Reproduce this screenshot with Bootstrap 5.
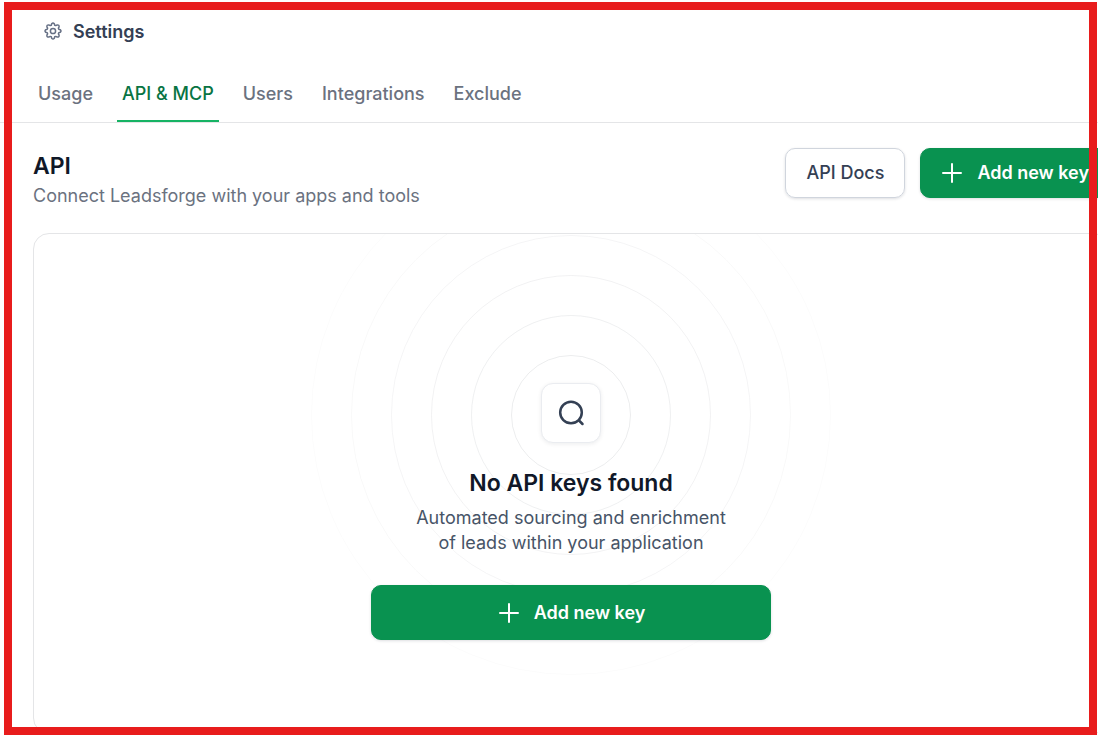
<!DOCTYPE html>
<html lang="en">
<head>
<meta charset="utf-8">
<meta name="viewport" content="width=device-width, initial-scale=1">
<title>Settings – API &amp; MCP</title>
<link rel="stylesheet" href="https://cdn.jsdelivr.net/npm/bootstrap@5.3.0/dist/css/bootstrap.min.css">
<style>
  body { font-family: Inter, "Liberation Sans", sans-serif; font-size: 18px; line-height: 25px; color: #344054; background: #fff; }
  .page-title { font-size: 18px; line-height: 24px; font-weight: 600; color: #344054; }
  .top-bar { padding: 20px 44px 0; gap: 11px; height: 64px; }
  .settings-tabs { padding-left: 33px; gap: 19px; border-bottom: 1px solid #e4e5e7; }
  .settings-tabs .nav-link { padding: 17px 5px 14px; font-weight: 500; color: #6b727f; border-bottom: 2px solid transparent; }
  .settings-tabs .nav-link.active { color: #087443; border-bottom-color: #16b364; }
  .content-area { padding: 25px 0 5px 33px; margin-right: -11px; }
  .section-title { font-size: 23px; line-height: 32px; font-weight: 600; color: #101828; margin: 2px 0 1px; }
  .section-text { color: #6b727f; }
  .btn { font-size: 18px; line-height: 24px; border-radius: 10px; box-shadow: 0 1px 3px rgba(16, 24, 40, .14); }
  .btn-docs { --bs-btn-color: #344054; --bs-btn-border-color: #d0d5dd; --bs-btn-hover-bg: #f9fafb; --bs-btn-hover-border-color: #d0d5dd; font-weight: 500; padding: 12px 20px; }
  .btn-add { --bs-btn-color: #fff; --bs-btn-bg: #099250; --bs-btn-border-color: #099250; --bs-btn-hover-color: #fff; --bs-btn-hover-bg: #087443; font-weight: 600; gap: 13px; padding: 12px 19px; }
  .btn-wide { min-height: 55px; max-width: 400px; }
  .header-actions { gap: 15px; }
  .empty-card { border: 1px solid #e4e5e7; border-radius: 16px; margin-top: 25px; }
  .search-tile { width: 60px; height: 60px; margin-top: 149px; border: 1px solid #eaecf0; border-radius: 12px; background: #fff; box-shadow: 0 1px 4px rgba(16, 24, 40, .08); }
  .rings { left: 50%; top: 50%; transform: translate(-50%, -50%); margin-top: 2px; pointer-events: none; }
  .empty-title { font-size: 23px; line-height: 30px; font-weight: 600; color: #101828; margin: 25px 0 7px; }
  .empty-text { color: #475467; margin-bottom: 30px; }
  .frame { inset: 2px 1px 4px 4px; border: 8px solid #e81c1c; pointer-events: none; z-index: 10; }
</style>
</head>
<body class="overflow-hidden">
<div class="d-flex flex-column vh-100 overflow-hidden">
  <header class="top-bar d-flex align-items-start">
    <svg width="18" height="22" viewBox="0 -2 18 22" fill="none" stroke="#667085" stroke-width="1.5" stroke-linejoin="round" aria-hidden="true">
      <path d="M7.700 1.800Q9 .2 10.300 1.800L10.700 3.200L11.800 3.600L13.200 2.900Q15.300 2.700 15.100 4.800L14.400 6.200L14.800 7.300L16.200 7.700Q17.800 9 16.200 10.300L14.800 10.700L14.400 11.800L15.100 13.200Q15.300 15.300 13.200 15.100L11.800 14.400L10.700 14.800L10.300 16.200Q9 17.800 7.700 16.200L7.300 14.800L6.200 14.400L4.800 15.100Q2.700 15.300 2.900 13.200L3.600 11.800L3.200 10.700L1.800 10.300Q.2 9 1.800 7.700L3.200 7.300L3.600 6.200L2.900 4.800Q2.700 2.700 4.800 2.900L6.200 3.600L7.300 3.200Z"/>
      <circle cx="9" cy="9" r="2.600"/>
    </svg>
    <h1 class="page-title mb-0">Settings</h1>
  </header>
  <nav class="settings-tabs nav flex-nowrap" aria-label="Settings sections">
    <a class="nav-link" href="#">Usage</a>
    <a class="nav-link active" aria-current="page" href="#">API &amp; MCP</a>
    <a class="nav-link" href="#">Users</a>
    <a class="nav-link" href="#">Integrations</a>
    <a class="nav-link" href="#">Exclude</a>
  </nav>
  <main class="content-area d-flex flex-column flex-grow-1">
    <div class="d-flex justify-content-between align-items-start">
      <div>
        <h2 class="section-title">API</h2>
        <p class="section-text mb-0">Connect Leadsforge with your apps and tools</p>
      </div>
      <div class="header-actions d-flex">
        <button type="button" class="btn btn-docs">API Docs</button>
        <button type="button" class="btn btn-add d-flex align-items-center">
          <svg width="24" height="24" viewBox="0 0 24 24" fill="none" stroke="#fff" stroke-width="2" stroke-linecap="round" aria-hidden="true"><path d="M12 3v18M3 12h18"/></svg>
          Add new key
        </button>
      </div>
    </div>
    <section class="empty-card flex-grow-1 overflow-hidden d-flex flex-column align-items-center">
      <div class="search-tile position-relative d-flex align-items-center justify-content-center flex-shrink-0">
        <svg class="rings position-absolute" width="522" height="522" viewBox="-261 -261 522 522" fill="none" stroke="#101828" aria-hidden="true">
          <circle r="59.500" stroke-opacity=".08"/>
          <circle r="99.500" stroke-opacity=".067"/>
          <circle r="139.500" stroke-opacity=".055"/>
          <circle r="179.500" stroke-opacity=".045"/>
          <circle r="219.500" stroke-opacity=".028"/>
          <circle r="259.500" stroke-opacity=".015"/>
        </svg>
        <svg width="28" height="28" viewBox="0 0 28 28" fill="none" stroke="#344054" stroke-width="2.500" stroke-linecap="round" aria-hidden="true"><circle cx="14" cy="13.500" r="10.800"/><path d="M22 21.500L25.500 25"/></svg>
      </div>
      <h3 class="empty-title position-relative">No API keys found</h3>
      <p class="empty-text position-relative text-center">Automated sourcing and enrichment<br>of leads within your application</p>
      <button type="button" class="btn btn-add btn-wide position-relative w-100 d-flex align-items-center justify-content-center">
        <svg width="24" height="24" viewBox="0 0 24 24" fill="none" stroke="#fff" stroke-width="2" stroke-linecap="round" aria-hidden="true"><path d="M12 3v18M3 12h18"/></svg>
        Add new key
      </button>
    </section>
  </main>
</div>
<div class="frame position-fixed" aria-hidden="true"></div>
<script src="https://cdn.jsdelivr.net/npm/bootstrap@5.3.0/dist/js/bootstrap.bundle.min.js"></script>
</body>
</html>
